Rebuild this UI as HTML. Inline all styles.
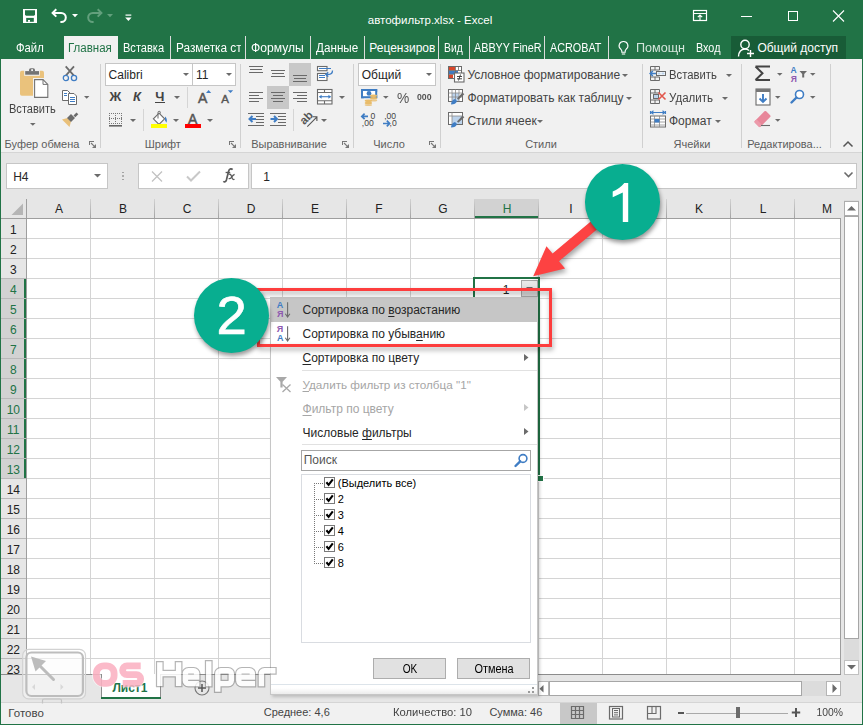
<!DOCTYPE html>
<html><head><meta charset="utf-8"><style>
html,body{margin:0;padding:0;width:863px;height:725px;overflow:hidden;background:#217346}
body{position:relative;font-family:"Liberation Sans", sans-serif}
.t{position:absolute;white-space:nowrap;font-family:"Liberation Sans", sans-serif}
svg{overflow:visible}
</style></head><body>
<div style="position:absolute;left:0px;top:0px;width:863px;height:725px;background:#217346"></div>
<svg style="position:absolute;left:23px;top:9px;" width="14" height="14" viewBox="0 0 14 14"><rect x="0" y="0" width="14" height="14" fill="#fff"/><path d="M2 1.2h10v4.6l-1 1h-8l-1-1z" fill="#217346"/><rect x="3.2" y="8.9" width="7.6" height="3.9" fill="#217346"/><rect x="5" y="11" width="2" height="1.8" fill="#fff"/></svg>
<svg style="position:absolute;left:50px;top:7px;" width="20" height="18" viewBox="0 0 20 18"><path d="M3 5.9h8.2a4.6 4.6 0 0 1 0 9.2h-0.8" fill="none" stroke="#fff" stroke-width="2"/><path d="M6.3 2.3L2.6 5.9l3.7 3.7" fill="none" stroke="#fff" stroke-width="2"/></svg>
<svg style="position:absolute;left:71.5px;top:13.8px;" width="6" height="4" viewBox="0 0 6 4"><path d="M0 0h6l-3 3.2z" fill="#fff"/></svg>
<svg style="position:absolute;left:84px;top:7px;" width="20" height="18" viewBox="0 0 20 18"><path d="M17 5.9h-8.2a4.6 4.6 0 0 0 0 9.2h0.8" fill="none" stroke="#63a07d" stroke-width="2"/><path d="M13.7 2.3l3.7 3.6-3.7 3.7" fill="none" stroke="#63a07d" stroke-width="2"/></svg>
<svg style="position:absolute;left:106.5px;top:13.8px;" width="6" height="4" viewBox="0 0 6 4"><path d="M0 0h6l-3 3.2z" fill="#63a07d"/></svg>
<svg style="position:absolute;left:125px;top:14px;" width="7" height="8" viewBox="0 0 7 8"><rect x="0.5" y="0.5" width="5.8" height="1.2" fill="#fff"/><path d="M0.2 3.6h6.4l-3.2 3.3z" fill="#fff"/></svg>
<div class="t" style="left:-70px;width:1000px;text-align:center;top:15.07px;font-size:11.5px;line-height:11.5px;color:#fff;font-weight:400;">автофильтр.xlsx - Excel</div>
<svg style="position:absolute;left:692px;top:9px;" width="17" height="14" viewBox="0 0 17 14"><rect x="1.5" y="1.5" width="13" height="10" fill="none" stroke="#fff" stroke-width="1.2"/><path d="M1.5 4.5h13" stroke="#fff" stroke-width="1"/><path d="M8 11V6M5.8 8.2L8 6l2.2 2.2" fill="none" stroke="#fff" stroke-width="1.1"/></svg>
<div style="position:absolute;left:741px;top:16px;width:11px;height:1px;background:#fff"></div>
<div style="position:absolute;left:788px;top:11px;width:10px;height:10px;border:1px solid #fff;box-sizing:border-box"></div>
<svg style="position:absolute;left:832px;top:10px;" width="13" height="12" viewBox="0 0 13 12"><path d="M1 0.5l11 11M12 0.5l-11 11" stroke="#fff" stroke-width="1.1"/></svg>
<div style="position:absolute;left:64px;top:36px;width:54px;height:24px;background:#f1f1f1"></div>
<div class="t" style="left:16.4px;top:42.34px;font-size:12px;line-height:12px;color:#fff;font-weight:400;transform:scaleX(0.94);transform-origin:left;">Файл</div>
<div class="t" style="left:68.1px;top:42.34px;font-size:12px;line-height:12px;color:#217346;font-weight:400;transform:scaleX(0.96);transform-origin:left;">Главная</div>
<div class="t" style="left:122.8px;top:42.34px;font-size:12px;line-height:12px;color:#fff;font-weight:400;transform:scaleX(0.92);transform-origin:left;">Вставка</div>
<div style="position:absolute;left:175.5px;top:38px;width:65px;height:20px;overflow:hidden">
<div class="t" style="left:0;top:4.34px;font-size:12px;line-height:12px;color:#fff;transform:scaleX(0.985);transform-origin:left">Разметка страницы</div></div>
<div class="t" style="left:251.2px;top:42.34px;font-size:12px;line-height:12px;color:#fff;font-weight:400;transform:scaleX(1.01);transform-origin:left;">Формулы</div>
<div class="t" style="left:315.5px;top:42.34px;font-size:12px;line-height:12px;color:#fff;font-weight:400;transform:scaleX(0.975);transform-origin:left;">Данные</div>
<div style="position:absolute;left:369.3px;top:38px;width:66px;height:20px;overflow:hidden">
<div class="t" style="left:0;top:4.34px;font-size:12px;line-height:12px;color:#fff;transform:scaleX(1.0);transform-origin:left">Рецензирование</div></div>
<div class="t" style="left:444.4px;top:42.34px;font-size:12px;line-height:12px;color:#fff;font-weight:400;transform:scaleX(0.86);transform-origin:left;">Вид</div>
<div style="position:absolute;left:473.8px;top:38px;width:67px;height:20px;overflow:hidden">
<div class="t" style="left:0;top:4.34px;font-size:12px;line-height:12px;color:#fff;transform:scaleX(0.9);transform-origin:left">ABBYY FineReader 12</div></div>
<div class="t" style="left:549.8px;top:42.34px;font-size:12px;line-height:12px;color:#fff;font-weight:400;transform:scaleX(0.9);transform-origin:left;">ACROBAT</div>
<div style="position:absolute;left:170px;top:36px;width:1px;height:23px;background:#dcdcdc"></div>
<div style="position:absolute;left:245px;top:36px;width:1px;height:23px;background:#dcdcdc"></div>
<div style="position:absolute;left:310px;top:36px;width:1px;height:23px;background:#dcdcdc"></div>
<div style="position:absolute;left:364px;top:36px;width:1px;height:23px;background:#dcdcdc"></div>
<div style="position:absolute;left:438px;top:36px;width:1px;height:23px;background:#dcdcdc"></div>
<div style="position:absolute;left:469px;top:36px;width:1px;height:23px;background:#dcdcdc"></div>
<div style="position:absolute;left:544px;top:36px;width:1px;height:23px;background:#dcdcdc"></div>
<div style="position:absolute;left:608px;top:36px;width:1px;height:23px;background:#dcdcdc"></div>
<svg style="position:absolute;left:617px;top:40px;" width="13" height="16" viewBox="0 0 13 16"><path d="M6.5 1.5a4.3 4.3 0 0 0-2.6 7.8c.6.5.9 1.1.9 1.8v1.2h3.4v-1.2c0-.7.3-1.3.9-1.8a4.3 4.3 0 0 0-2.6-7.8z" fill="none" stroke="#fff" stroke-width="1.1"/><path d="M4.8 14h3.4" stroke="#fff" stroke-width="1.1"/></svg>
<div class="t" style="left:635.6px;top:42.34px;font-size:12px;line-height:12px;color:#d5e6dc;font-weight:400;transform:scaleX(1.05);transform-origin:left;">Помощн</div>
<div class="t" style="left:696.2px;top:42.34px;font-size:12px;line-height:12px;color:#fff;font-weight:400;transform:scaleX(0.9);transform-origin:left;">Вход</div>
<div style="position:absolute;left:731px;top:36px;width:115px;height:23px;background:#185c37"></div>
<svg style="position:absolute;left:737px;top:38px;" width="18" height="20" viewBox="0 0 18 20"><circle cx="8" cy="6.5" r="4.2" fill="none" stroke="#fff" stroke-width="1.4"/><path d="M1.5 18.5c0-4.5 2.8-7.5 6.5-7.5 1.6 0 3 .5 4 1.4" fill="none" stroke="#fff" stroke-width="1.4"/><path d="M13.5 12v7M10 15.5h7" stroke="#fff" stroke-width="1.4"/></svg>
<div class="t" style="left:757.4px;top:42.34px;font-size:12px;line-height:12px;color:#fff;font-weight:400;">Общий доступ</div>
<div style="position:absolute;left:1px;top:59px;width:861px;height:93px;background:#f1f1f1"></div>
<div style="position:absolute;left:1px;top:152px;width:861px;height:1px;background:#d5d5d5"></div>
<div style="position:absolute;left:100px;top:64px;width:1px;height:84px;background:#d0d0d0"></div>
<div style="position:absolute;left:240px;top:64px;width:1px;height:84px;background:#d0d0d0"></div>
<div style="position:absolute;left:353px;top:64px;width:1px;height:84px;background:#d0d0d0"></div>
<div style="position:absolute;left:440px;top:64px;width:1px;height:84px;background:#d0d0d0"></div>
<div style="position:absolute;left:642px;top:64px;width:1px;height:84px;background:#d0d0d0"></div>
<div style="position:absolute;left:741px;top:64px;width:1px;height:84px;background:#d0d0d0"></div>
<div style="position:absolute;left:830px;top:64px;width:1px;height:84px;background:#d0d0d0"></div>
<div class="t" style="left:4.6px;top:139.09px;font-size:11px;line-height:11px;color:#5d5d5d;font-weight:400;">Буфер обмена</div>
<div class="t" style="left:-337.2px;width:1000px;text-align:center;top:139.09px;font-size:11px;line-height:11px;color:#5d5d5d;font-weight:400;">Шрифт</div>
<div class="t" style="left:-211px;width:1000px;text-align:center;top:139.09px;font-size:11px;line-height:11px;color:#5d5d5d;font-weight:400;">Выравнивание</div>
<div class="t" style="left:-111px;width:1000px;text-align:center;top:139.09px;font-size:11px;line-height:11px;color:#5d5d5d;font-weight:400;">Число</div>
<div class="t" style="left:41px;width:1000px;text-align:center;top:139.09px;font-size:11px;line-height:11px;color:#5d5d5d;font-weight:400;">Стили</div>
<div class="t" style="left:192px;width:1000px;text-align:center;top:139.09px;font-size:11px;line-height:11px;color:#5d5d5d;font-weight:400;">Ячейки</div>
<div class="t" style="left:747.2px;top:139.09px;font-size:11px;line-height:11px;color:#5d5d5d;font-weight:400;">Редактирова...</div>
<svg style="position:absolute;left:19px;top:66px;" width="32" height="34" viewBox="0 0 32 34"><rect x="1" y="4.8" width="24" height="24.9" rx="1.8" fill="#eac27c"/><rect x="5.2" y="4" width="15.6" height="5.8" fill="#f1f1f1"/><rect x="6.2" y="5.1" width="13.8" height="3.6" fill="#737373"/><path d="M10 5.2v-1.2a1.8 1.8 0 0 1 1.8-1.8h2.4a1.8 1.8 0 0 1 1.8 1.8v1.2z" fill="#737373"/><rect x="12.2" y="3.2" width="1.8" height="1.8" fill="#f1f1f1"/><rect x="14" y="12" width="16" height="21" fill="#f1f1f1"/><path d="M15.6 13.6h8.4l4.8 4.8v13h-13.2z" fill="#fff" stroke="#737373" stroke-width="1.1"/><path d="M24 13.6v4.8h4.8" fill="none" stroke="#737373" stroke-width="1"/></svg>
<div class="t" style="left:8.7px;top:102.84px;font-size:12px;line-height:12px;color:#444444;font-weight:400;transform:scaleX(0.92);transform-origin:left;">Вставить</div>
<svg style="position:absolute;left:29.8px;top:123px;" width="5.6" height="4" viewBox="0 0 5.6 4"><path d="M0 0h5.6l-2.8 2.8z" fill="#6b6b6b"/></svg>
<svg style="position:absolute;left:62px;top:65px;" width="16" height="17" viewBox="0 0 16 17"><path d="M3.7 1.3l8 9M12 1.3l-8 9" stroke="#6b6b6b" stroke-width="1.8"/><circle cx="3.9" cy="13" r="2.6" fill="#f1f1f1" stroke="#3f7dc4" stroke-width="1.3"/><circle cx="12" cy="13" r="2.6" fill="#f1f1f1" stroke="#3f7dc4" stroke-width="1.3"/></svg>
<svg style="position:absolute;left:61px;top:89px;" width="17" height="16" viewBox="0 0 17 16"><path d="M1.5 1.5h5l2.5 2.5v7.5h-7.5z" fill="#fff" stroke="#6b6b6b" stroke-width="1"/><rect x="3" y="4" width="3" height="1" fill="#3f7dc4"/><rect x="3" y="6" width="3" height="1" fill="#3f7dc4"/><path d="M7.5 4.5h5.5l2.5 2.5v8.5h-8z" fill="#fff" stroke="#6b6b6b" stroke-width="1"/><rect x="9" y="8" width="5" height="1" fill="#3f7dc4"/><rect x="9" y="10" width="5" height="1" fill="#3f7dc4"/><rect x="9" y="12" width="5" height="1" fill="#3f7dc4"/></svg>
<svg style="position:absolute;left:84px;top:96px;" width="5.4" height="4" viewBox="0 0 5.4 4"><path d="M0 0h5.4l-2.7 2.7z" fill="#6b6b6b"/></svg>
<svg style="position:absolute;left:61px;top:111px;" width="18" height="17" viewBox="0 0 18 17"><path d="M1 8.5l5.5-1.5 3.5 3.5-1.5 5.5z" fill="#e9c07a"/><path d="M6 7l4-4 4 4-4 4z" fill="#6b6b6b"/><path d="M12.5 4.5l3-3 1.8 1.8-3 3z" fill="#6b6b6b"/></svg>
<svg style="position:absolute;left:89px;top:140px;" width="8" height="9" viewBox="0 0 8 9"><rect x="0" y="1" width="5" height="1" fill="#777"/><rect x="0" y="1" width="1" height="4" fill="#777"/><path d="M2 3l3.2 3.2" stroke="#777" stroke-width="1.1"/><path d="M7 8H3L7 4z" fill="#777"/></svg>
<div style="position:absolute;left:105px;top:63px;width:88px;height:23px;background:#fff;border:1px solid #c6c6c6;box-sizing:border-box"></div>
<div style="position:absolute;left:192px;top:63px;width:44px;height:23px;background:#fff;border:1px solid #c6c6c6;box-sizing:border-box"></div>
<div class="t" style="left:108.6px;top:68.84px;font-size:12px;line-height:12px;color:#262626;font-weight:400;">Calibri</div>
<div class="t" style="left:196px;top:68.84px;font-size:12px;line-height:12px;color:#262626;font-weight:400;">11</div>
<svg style="position:absolute;left:182.5px;top:73px;" width="6" height="4" viewBox="0 0 6 4"><path d="M0 0h6l-3.0 3.0z" fill="#6b6b6b"/></svg>
<svg style="position:absolute;left:225.5px;top:73px;" width="6" height="4" viewBox="0 0 6 4"><path d="M0 0h6l-3.0 3.0z" fill="#6b6b6b"/></svg>
<div class="t" style="left:109.5px;top:90.00px;font-size:13px;line-height:13px;color:#444444;font-weight:700;">Ж</div>
<div class="t" style="left:133px;top:90.00px;font-size:13px;line-height:13px;color:#444444;font-weight:700;font-style:italic">К</div>
<div class="t" style="left:155.3px;top:90.00px;font-size:13px;line-height:13px;color:#444444;font-weight:700;">Ч</div>
<div style="position:absolute;left:155px;top:102px;width:10px;height:1px;background:#444444"></div>
<svg style="position:absolute;left:173.5px;top:96px;" width="6" height="4" viewBox="0 0 6 4"><path d="M0 0h6l-3.0 3.0z" fill="#6b6b6b"/></svg>
<div style="position:absolute;left:187px;top:87px;width:1px;height:21px;background:#d5d5d5"></div>
<svg style="position:absolute;left:197px;top:88px;" width="16" height="16" viewBox="0 0 16 16"><text x="1" y="14.5" font-family="Liberation Sans" font-size="14" fill="#555" stroke="#555" stroke-width="0.5">A</text><path d="M9 5l2.6-2.9 2.6 2.9z" fill="#3f7dc4"/></svg>
<svg style="position:absolute;left:220px;top:88px;" width="16" height="16" viewBox="0 0 16 16"><text x="1.2" y="14.5" font-family="Liberation Sans" font-size="11.5" fill="#555" stroke="#555" stroke-width="0.45">A</text><path d="M7.8 2.2h5.4l-2.7 2.9z" fill="#3f7dc4"/></svg>
<svg style="position:absolute;left:109px;top:113px;" width="14" height="14" viewBox="0 0 14 14"><rect x="0" y="0" width="1" height="1" fill="#777"/><rect x="0" y="5" width="1" height="1" fill="#777"/><rect x="0" y="10" width="1" height="1" fill="#777"/><rect x="2" y="0" width="1" height="1" fill="#777"/><rect x="2" y="5" width="1" height="1" fill="#777"/><rect x="2" y="10" width="1" height="1" fill="#777"/><rect x="4" y="0" width="1" height="1" fill="#777"/><rect x="4" y="5" width="1" height="1" fill="#777"/><rect x="4" y="10" width="1" height="1" fill="#777"/><rect x="6" y="0" width="1" height="1" fill="#777"/><rect x="6" y="5" width="1" height="1" fill="#777"/><rect x="6" y="10" width="1" height="1" fill="#777"/><rect x="8" y="0" width="1" height="1" fill="#777"/><rect x="8" y="5" width="1" height="1" fill="#777"/><rect x="8" y="10" width="1" height="1" fill="#777"/><rect x="10" y="0" width="1" height="1" fill="#777"/><rect x="10" y="5" width="1" height="1" fill="#777"/><rect x="10" y="10" width="1" height="1" fill="#777"/><rect x="12" y="0" width="1" height="1" fill="#777"/><rect x="12" y="5" width="1" height="1" fill="#777"/><rect x="12" y="10" width="1" height="1" fill="#777"/><rect x="0" y="0" width="1" height="1" fill="#777"/><rect x="6" y="0" width="1" height="1" fill="#777"/><rect x="12" y="0" width="1" height="1" fill="#777"/><rect x="0" y="2" width="1" height="1" fill="#777"/><rect x="6" y="2" width="1" height="1" fill="#777"/><rect x="12" y="2" width="1" height="1" fill="#777"/><rect x="0" y="4" width="1" height="1" fill="#777"/><rect x="6" y="4" width="1" height="1" fill="#777"/><rect x="12" y="4" width="1" height="1" fill="#777"/><rect x="0" y="6" width="1" height="1" fill="#777"/><rect x="6" y="6" width="1" height="1" fill="#777"/><rect x="12" y="6" width="1" height="1" fill="#777"/><rect x="0" y="8" width="1" height="1" fill="#777"/><rect x="6" y="8" width="1" height="1" fill="#777"/><rect x="12" y="8" width="1" height="1" fill="#777"/><rect x="0" y="10" width="1" height="1" fill="#777"/><rect x="6" y="10" width="1" height="1" fill="#777"/><rect x="12" y="10" width="1" height="1" fill="#777"/><rect x="0" y="12" width="13" height="1.6" fill="#666"/></svg>
<svg style="position:absolute;left:129.5px;top:118.5px;" width="6" height="4" viewBox="0 0 6 4"><path d="M0 0h6l-3.0 3.0z" fill="#6b6b6b"/></svg>
<div style="position:absolute;left:143px;top:109px;width:1px;height:22px;background:#d5d5d5"></div>
<svg style="position:absolute;left:150px;top:110px;" width="18" height="19" viewBox="0 0 18 19"><path d="M9 3.2l5.6 5.6-5.6 5.6-5.6-5.6z" fill="#fff" stroke="#6b6b6b" stroke-width="1.1"/><path d="M8 8.5V2.5a1.2 1.2 0 0 1 2.4 0v1" fill="none" stroke="#6b6b6b" stroke-width="1"/><path d="M15 6.5c1.6 1.2 2.4 3.2 1.5 6.2l-1.6-2.4z" fill="#3f7dc4"/><rect x="1" y="14" width="16" height="4" fill="#ffff00"/></svg>
<svg style="position:absolute;left:172.5px;top:118.5px;" width="6" height="4" viewBox="0 0 6 4"><path d="M0 0h6l-3.0 3.0z" fill="#6b6b6b"/></svg>
<svg style="position:absolute;left:184px;top:110px;" width="18" height="19" viewBox="0 0 18 19"><text x="4" y="13.6" font-family="Liberation Sans" font-size="14" fill="#555" stroke="#555" stroke-width="0.5">A</text><rect x="1" y="14" width="16" height="4" fill="#ff0000"/></svg>
<svg style="position:absolute;left:206.5px;top:118.5px;" width="6" height="4" viewBox="0 0 6 4"><path d="M0 0h6l-3.0 3.0z" fill="#6b6b6b"/></svg>
<svg style="position:absolute;left:229px;top:140px;" width="8" height="9" viewBox="0 0 8 9"><rect x="0" y="1" width="5" height="1" fill="#777"/><rect x="0" y="1" width="1" height="4" fill="#777"/><path d="M2 3l3.2 3.2" stroke="#777" stroke-width="1.1"/><path d="M7 8H3L7 4z" fill="#777"/></svg>
<div style="position:absolute;left:289px;top:63px;width:22px;height:23px;background:#c8c8c8"></div>
<div style="position:absolute;left:267px;top:86px;width:22px;height:23px;background:#c8c8c8"></div>
<div style="position:absolute;left:249px;top:66px;width:14px;height:1px;background:#696969"></div>
<div style="position:absolute;left:250px;top:69px;width:12px;height:1px;background:#696969"></div>
<div style="position:absolute;left:249px;top:72px;width:14px;height:1px;background:#696969"></div>
<div style="position:absolute;left:271px;top:70px;width:14px;height:1px;background:#696969"></div>
<div style="position:absolute;left:272px;top:73px;width:12px;height:1px;background:#696969"></div>
<div style="position:absolute;left:271px;top:76px;width:14px;height:1px;background:#696969"></div>
<div style="position:absolute;left:293px;top:75px;width:14px;height:1px;background:#696969"></div>
<div style="position:absolute;left:294px;top:78px;width:12px;height:1px;background:#696969"></div>
<div style="position:absolute;left:293px;top:81px;width:14px;height:1px;background:#696969"></div>
<div style="position:absolute;left:249px;top:92px;width:14px;height:1px;background:#696969"></div>
<div style="position:absolute;left:249px;top:95px;width:10px;height:1px;background:#696969"></div>
<div style="position:absolute;left:249px;top:98px;width:14px;height:1px;background:#696969"></div>
<div style="position:absolute;left:249px;top:101px;width:10px;height:1px;background:#696969"></div>
<div style="position:absolute;left:271px;top:92px;width:14px;height:1px;background:#696969"></div>
<div style="position:absolute;left:273px;top:95px;width:10px;height:1px;background:#696969"></div>
<div style="position:absolute;left:271px;top:98px;width:14px;height:1px;background:#696969"></div>
<div style="position:absolute;left:273px;top:101px;width:10px;height:1px;background:#696969"></div>
<div style="position:absolute;left:293px;top:92px;width:14px;height:1px;background:#696969"></div>
<div style="position:absolute;left:297px;top:95px;width:10px;height:1px;background:#696969"></div>
<div style="position:absolute;left:293px;top:98px;width:14px;height:1px;background:#696969"></div>
<div style="position:absolute;left:297px;top:101px;width:10px;height:1px;background:#696969"></div>
<svg style="position:absolute;left:316px;top:65px;" width="18" height="17" viewBox="0 0 18 17"><rect x="1.5" y="1.5" width="9.5" height="4.2" fill="#fff" stroke="#6b6b6b" stroke-width="1.1"/><rect x="1.5" y="8.5" width="9.5" height="7" fill="#fff" stroke="#6b6b6b" stroke-width="1.1"/><path d="M3 3.5h12M3 10.5h6M3 12.5h6" stroke="#3f7dc4" stroke-width="1"/><path d="M16.5 5.5c0 2.5-1.5 4-4.5 4h-2" fill="none" stroke="#3f7dc4" stroke-width="1.3"/><path d="M12.2 7.2l-2.4 2.3 2.4 2.3" fill="none" stroke="#3f7dc4" stroke-width="1.3"/></svg>
<svg style="position:absolute;left:316px;top:88px;" width="18" height="17" viewBox="0 0 18 17"><rect x="1.5" y="1.5" width="14.5" height="14.5" fill="#fff" stroke="#6b6b6b" stroke-width="1.1"/><path d="M1.5 4.5h14.5M1.5 12.8h14.5M8.5 1.5v3M8.5 12.8v3.2" stroke="#6b6b6b" stroke-width="1.1"/><path d="M3.5 8.7h11" stroke="#3f7dc4" stroke-width="1.1"/><path d="M3 8.7l2.6-2v4zM15 8.7l-2.6-2v4z" fill="#3f7dc4"/></svg>
<svg style="position:absolute;left:339px;top:96px;" width="6" height="4" viewBox="0 0 6 4"><path d="M0 0h6l-3.0 3.0z" fill="#6b6b6b"/></svg>
<div style="position:absolute;left:248px;top:113px;width:16px;height:1px;background:#696969"></div>
<div style="position:absolute;left:256px;top:116px;width:8px;height:1px;background:#696969"></div>
<div style="position:absolute;left:256px;top:119px;width:8px;height:1px;background:#696969"></div>
<div style="position:absolute;left:256px;top:122px;width:8px;height:1px;background:#696969"></div>
<div style="position:absolute;left:248px;top:125px;width:16px;height:1px;background:#696969"></div>
<svg style="position:absolute;left:248px;top:114px;" width="9" height="10" viewBox="0 0 9 10"><path d="M1.5 5h6.5M4.5 2l-3 3 3 3" fill="none" stroke="#3f7dc4" stroke-width="2"/></svg>
<div style="position:absolute;left:270px;top:113px;width:16px;height:1px;background:#696969"></div>
<div style="position:absolute;left:278px;top:116px;width:8px;height:1px;background:#696969"></div>
<div style="position:absolute;left:278px;top:119px;width:8px;height:1px;background:#696969"></div>
<div style="position:absolute;left:278px;top:122px;width:8px;height:1px;background:#696969"></div>
<div style="position:absolute;left:270px;top:125px;width:16px;height:1px;background:#696969"></div>
<svg style="position:absolute;left:270px;top:114px;" width="9" height="10" viewBox="0 0 9 10"><path d="M0.5 5h6M4 2l3 3-3 3" fill="none" stroke="#3f7dc4" stroke-width="2"/></svg>
<div style="position:absolute;left:293px;top:109px;width:1px;height:22px;background:#d5d5d5"></div>
<svg style="position:absolute;left:300px;top:111px;" width="20" height="18" viewBox="0 0 20 18"><text x="0" y="0" font-family="Liberation Sans" font-size="11.5" font-weight="700" fill="#555" transform="translate(4.2 14.2) rotate(-45)">ab</text><path d="M7.3 15.6l9.2-9.2M12.6 5.8h4.3v4.3" fill="none" stroke="#555" stroke-width="1.1"/></svg>
<svg style="position:absolute;left:321px;top:119px;" width="6" height="4" viewBox="0 0 6 4"><path d="M0 0h6l-3.0 3.0z" fill="#6b6b6b"/></svg>
<svg style="position:absolute;left:342px;top:140px;" width="8" height="9" viewBox="0 0 8 9"><rect x="0" y="1" width="5" height="1" fill="#777"/><rect x="0" y="1" width="1" height="4" fill="#777"/><path d="M2 3l3.2 3.2" stroke="#777" stroke-width="1.1"/><path d="M7 8H3L7 4z" fill="#777"/></svg>
<div style="position:absolute;left:358px;top:63px;width:78px;height:23px;background:#fff;border:1px solid #c6c6c6;box-sizing:border-box"></div>
<div class="t" style="left:361.7px;top:68.84px;font-size:12px;line-height:12px;color:#262626;font-weight:400;">Общий</div>
<svg style="position:absolute;left:426px;top:73px;" width="6" height="4" viewBox="0 0 6 4"><path d="M0 0h6l-3.0 3.0z" fill="#6b6b6b"/></svg>
<svg style="position:absolute;left:360px;top:88px;" width="19" height="19" viewBox="0 0 19 19"><rect x="2" y="2" width="14.2" height="7.2" fill="#fff" stroke="#3f7dc4" stroke-width="2"/><path d="M1 1h3l-3 3zM17.2 1h-3l3 3zM1 10.2v-3l3 3zM17.2 10.2v-3l-3 3z" fill="#3f7dc4"/><circle cx="9" cy="5.4" r="2.4" fill="#3f7dc4"/><ellipse cx="13.6" cy="7.8" rx="3.6" ry="1.3" fill="#e9bc6a"/><ellipse cx="13.6" cy="10.2" rx="3.6" ry="1.2" fill="#e9bc6a"/><ellipse cx="13.6" cy="12.4" rx="3.6" ry="1.1" fill="#eac88c"/><ellipse cx="8.4" cy="12.7" rx="3.7" ry="1.3" fill="#e9bc6a"/><ellipse cx="8.4" cy="15" rx="3.7" ry="1.2" fill="#e9bc6a"/><ellipse cx="8.4" cy="17" rx="3.7" ry="1.1" fill="#eac88c"/></svg>
<svg style="position:absolute;left:382.7px;top:96.2px;" width="5.6" height="4" viewBox="0 0 5.6 4"><path d="M0 0h5.6l-2.8 2.8z" fill="#6b6b6b"/></svg>
<div class="t" style="left:397.3px;top:90.10px;font-size:15px;line-height:15px;color:#555;font-weight:400;transform:scaleX(0.92);transform-origin:left;">%</div>
<div class="t" style="left:417.4px;top:92.26px;font-size:9.5px;line-height:9.5px;color:#555;font-weight:700;transform:scaleX(0.92);transform-origin:left;">000</div>
<svg style="position:absolute;left:360px;top:111px;" width="17" height="17" viewBox="0 0 17 17"><path d="M1.8 5.4h6.2M4.6 2.6L1.8 5.4l2.8 2.8" fill="none" stroke="#3f7dc4" stroke-width="1.7"/><text x="10.5" y="8" font-family="Liberation Sans" font-size="8.6" fill="#444">0</text><text x="1.8" y="15.2" font-family="Liberation Sans" font-size="8.6" fill="#444">,00</text></svg>
<svg style="position:absolute;left:382px;top:111px;" width="17" height="17" viewBox="0 0 17 17"><text x="2.2" y="8" font-family="Liberation Sans" font-size="8.6" fill="#444">,00</text><path d="M1 12.5h6.4M4.8 9.7l2.8 2.8-2.8 2.8" fill="none" stroke="#3f7dc4" stroke-width="1.7"/><text x="7.6" y="15.2" font-family="Liberation Sans" font-size="8.6" fill="#444">,0</text></svg>
<svg style="position:absolute;left:429px;top:140px;" width="8" height="9" viewBox="0 0 8 9"><rect x="0" y="1" width="5" height="1" fill="#777"/><rect x="0" y="1" width="1" height="4" fill="#777"/><path d="M2 3l3.2 3.2" stroke="#777" stroke-width="1.1"/><path d="M7 8H3L7 4z" fill="#777"/></svg>
<svg style="position:absolute;left:447px;top:65px;" width="18" height="18" viewBox="0 0 18 18"><rect x="1.5" y="1.5" width="13" height="12" fill="#fff" stroke="#6b6b6b" stroke-width="1"/><rect x="2" y="2" width="6" height="3.5" fill="#d9472b"/><rect x="2" y="6" width="9" height="3" fill="#3f7dc4"/><rect x="2" y="9.5" width="4" height="3.5" fill="#d9472b"/><path d="M8.5 1.5v12M11.5 1.5v4M1.5 5.5h13M1.5 9.3h13" stroke="#6b6b6b" stroke-width="0.8"/><rect x="7.5" y="8" width="9.5" height="9" fill="#fff" stroke="#6b6b6b" stroke-width="1.1"/><path d="M10 11.5h5M10 13.8h5M11.5 15.5l2-6" stroke="#333" stroke-width="0.9"/></svg>
<div class="t" style="left:467.4px;top:68.74px;font-size:12px;line-height:12px;color:#444444;font-weight:400;">Условное форматирование</div>
<svg style="position:absolute;left:621.5px;top:73.5px;" width="6" height="4" viewBox="0 0 6 4"><path d="M0 0h6l-3.0 3.0z" fill="#6b6b6b"/></svg>
<svg style="position:absolute;left:447px;top:88px;" width="18" height="18" viewBox="0 0 18 18"><rect x="1.5" y="1.5" width="14" height="12" fill="#fff" stroke="#6b6b6b" stroke-width="1"/><rect x="5" y="5" width="7" height="8" fill="#bcd3ec"/><path d="M5 1.5v12M8.5 1.5v12M12 1.5v12M1.5 5h14M1.5 9h14" stroke="#8a8a8a" stroke-width="0.8"/><path d="M10 10.5l5.5-6 1.8 1.8-6 5.5z" fill="#6b6b6b"/><path d="M4 16.5c0-2.5 1.5-5 4-5.5l2 2c-.5 2.5-3 3.5-6 3.5z" fill="#3f7dc4"/></svg>
<div class="t" style="left:467.4px;top:91.74px;font-size:12px;line-height:12px;color:#444444;font-weight:400;">Форматировать как таблицу</div>
<svg style="position:absolute;left:625.5px;top:96.5px;" width="6" height="4" viewBox="0 0 6 4"><path d="M0 0h6l-3.0 3.0z" fill="#6b6b6b"/></svg>
<svg style="position:absolute;left:447px;top:111px;" width="18" height="18" viewBox="0 0 18 18"><rect x="1.5" y="1.5" width="14" height="12" fill="#fff" stroke="#6b6b6b" stroke-width="1"/><rect x="5" y="5" width="10" height="8" fill="#bcd3ec"/><path d="M1.5 5h14M5 1.5v12" stroke="#8a8a8a" stroke-width="0.8"/><path d="M10 10.5l5.5-6 1.8 1.8-6 5.5z" fill="#6b6b6b"/><path d="M4 16.5c0-2.5 1.5-5 4-5.5l2 2c-.5 2.5-3 3.5-6 3.5z" fill="#3f7dc4"/></svg>
<div class="t" style="left:467.4px;top:114.74px;font-size:12px;line-height:12px;color:#444444;font-weight:400;">Стили ячеек</div>
<svg style="position:absolute;left:537px;top:119.5px;" width="6" height="4" viewBox="0 0 6 4"><path d="M0 0h6l-3.0 3.0z" fill="#6b6b6b"/></svg>
<svg style="position:absolute;left:649px;top:65px;" width="18" height="18" viewBox="0 0 18 18"><path d="M1.5 1.5h9v3.5h-9zM1.5 12h9v3.5h-9zM1.5 5v7M6 1.5v3.5M6 12v3.5" fill="none" stroke="#6b6b6b" stroke-width="1"/><rect x="7.5" y="6.5" width="9" height="4" fill="#fff" stroke="#6b6b6b" stroke-width="1"/><rect x="8.5" y="7.5" width="3" height="2" fill="#bcd3ec"/><rect x="12.5" y="7.5" width="3" height="2" fill="#bcd3ec"/><path d="M1 8.5h6M3.8 6l-2.6 2.5 2.6 2.5" fill="none" stroke="#3f7dc4" stroke-width="1.6"/></svg>
<div class="t" style="left:669px;top:68.74px;font-size:12px;line-height:12px;color:#444444;font-weight:400;transform:scaleX(0.94);transform-origin:left;">Вставить</div>
<svg style="position:absolute;left:726px;top:73.5px;" width="6" height="4" viewBox="0 0 6 4"><path d="M0 0h6l-3.0 3.0z" fill="#6b6b6b"/></svg>
<svg style="position:absolute;left:649px;top:88px;" width="18" height="18" viewBox="0 0 18 18"><path d="M1.5 1.5h9v3.5h-9zM1.5 12h9v3.5h-9zM1.5 5v7M6 1.5v3.5M6 12v3.5" fill="none" stroke="#6b6b6b" stroke-width="1"/><rect x="4.5" y="6.5" width="5" height="4" fill="#bcd3ec" stroke="#6b6b6b" stroke-width="1"/><path d="M9.5 4.5l7 7M16.5 4.5l-7 7" stroke="#e2574c" stroke-width="1.6"/></svg>
<div class="t" style="left:669px;top:91.74px;font-size:12px;line-height:12px;color:#444444;font-weight:400;transform:scaleX(0.96);transform-origin:left;">Удалить</div>
<svg style="position:absolute;left:722px;top:96.5px;" width="6" height="4" viewBox="0 0 6 4"><path d="M0 0h6l-3.0 3.0z" fill="#6b6b6b"/></svg>
<svg style="position:absolute;left:649px;top:110px;" width="18" height="19" viewBox="0 0 18 19"><path d="M1.5 1v3M16.5 1v3M2 2.5h14M4.5 0.8l-2.3 1.7 2.3 1.7M13.5 0.8l2.3 1.7-2.3 1.7" fill="none" stroke="#3f7dc4" stroke-width="1.1"/><rect x="1.5" y="6" width="15" height="11" fill="#fff" stroke="#6b6b6b" stroke-width="1"/><path d="M1.5 9h15M1.5 12h15M1.5 15h15M5.5 6v11M10.5 6v11" stroke="#8a8a8a" stroke-width="0.8"/><rect x="5.5" y="9" width="5" height="3.5" fill="#3f7dc4"/></svg>
<div class="t" style="left:669px;top:114.74px;font-size:12px;line-height:12px;color:#444444;font-weight:400;">Формат</div>
<svg style="position:absolute;left:715px;top:119.5px;" width="6" height="4" viewBox="0 0 6 4"><path d="M0 0h6l-3.0 3.0z" fill="#6b6b6b"/></svg>
<svg style="position:absolute;left:754px;top:65px;" width="18" height="17" viewBox="0 0 18 17"><path d="M1.5 1.5h14.5M1.5 15h14.5M1.5 1.5l7 6.75-7 6.75" fill="none" stroke="#444" stroke-width="2"/></svg>
<svg style="position:absolute;left:777px;top:73px;" width="5.5" height="4" viewBox="0 0 5.5 4"><path d="M0 0h5.5l-2.75 2.75z" fill="#6b6b6b"/></svg>
<svg style="position:absolute;left:790px;top:65px;" width="18" height="18" viewBox="0 0 18 18"><text x="0.5" y="7.5" font-family="Liberation Sans" font-size="8.5" font-weight="700" fill="#3f7dc4">A</text><text x="0.8" y="16.5" font-family="Liberation Sans" font-size="8.5" font-weight="700" fill="#8e58b0">Я</text><path d="M9.5 6h7.5l-2.8 3v3.5h-2v-3.5z" fill="#6b6b6b"/></svg>
<svg style="position:absolute;left:810px;top:73px;" width="5.5" height="4" viewBox="0 0 5.5 4"><path d="M0 0h5.5l-2.75 2.75z" fill="#6b6b6b"/></svg>
<svg style="position:absolute;left:755px;top:88px;" width="17" height="18" viewBox="0 0 17 18"><rect x="1" y="1" width="14" height="16" fill="#fff" stroke="#6b6b6b" stroke-width="1.1"/><rect x="1" y="1" width="14" height="3" fill="#777"/><path d="M8 6v8M4.5 10.5l3.5 3.5 3.5-3.5" fill="none" stroke="#3f7dc4" stroke-width="1.9"/></svg>
<svg style="position:absolute;left:775px;top:96px;" width="5.5" height="4" viewBox="0 0 5.5 4"><path d="M0 0h5.5l-2.75 2.75z" fill="#6b6b6b"/></svg>
<svg style="position:absolute;left:790px;top:89px;" width="16" height="15" viewBox="0 0 16 15"><circle cx="9.5" cy="5.5" r="4" fill="#fff" stroke="#3f7dc4" stroke-width="1.6"/><path d="M6.5 8.5l-5 5" stroke="#3f7dc4" stroke-width="2.4" stroke-linecap="round"/></svg>
<svg style="position:absolute;left:810px;top:96px;" width="5.5" height="4" viewBox="0 0 5.5 4"><path d="M0 0h5.5l-2.75 2.75z" fill="#6b6b6b"/></svg>
<svg style="position:absolute;left:755px;top:112px;" width="17" height="15" viewBox="0 0 17 15"><g transform="translate(7.5 7) rotate(-45)"><rect x="-8" y="-4" width="16" height="8" rx="1.2" fill="#e8879a"/><rect x="-8" y="-4" width="3.5" height="8" rx="1" fill="#ec9aaa"/></g><path d="M6 13.5h9" stroke="#6b6b6b" stroke-width="1.1"/></svg>
<svg style="position:absolute;left:775px;top:119px;" width="5.5" height="4" viewBox="0 0 5.5 4"><path d="M0 0h5.5l-2.75 2.75z" fill="#6b6b6b"/></svg>
<svg style="position:absolute;left:842px;top:140px;" width="12" height="8" viewBox="0 0 12 8"><path d="M1.5 6.5l4.5-4.5 4.5 4.5" fill="none" stroke="#555" stroke-width="1.5"/></svg>
<div style="position:absolute;left:1px;top:153px;width:861px;height:46px;background:#e6e6e6"></div>
<div style="position:absolute;left:6px;top:163px;width:102px;height:26px;background:#fff;border:1px solid #c6c6c6;box-sizing:border-box"></div>
<div class="t" style="left:13.2px;top:170.84px;font-size:12px;line-height:12px;color:#262626;font-weight:400;">H4</div>
<svg style="position:absolute;left:94px;top:173.5px;" width="7" height="4" viewBox="0 0 7 4"><path d="M0 0h7l-3.5 3.5z" fill="#6b6b6b"/></svg>
<div style="position:absolute;left:122px;top:171.5px;width:1.6px;height:1.6px;background:#9a9a9a;border-radius:1px"></div>
<div style="position:absolute;left:122px;top:175px;width:1.6px;height:1.6px;background:#9a9a9a;border-radius:1px"></div>
<div style="position:absolute;left:122px;top:178.5px;width:1.6px;height:1.6px;background:#9a9a9a;border-radius:1px"></div>
<div style="position:absolute;left:138px;top:163px;width:111px;height:26px;background:#fff;border:1px solid #c6c6c6;box-sizing:border-box"></div>
<svg style="position:absolute;left:151px;top:171px;" width="12" height="11" viewBox="0 0 12 11"><path d="M1 0.5l10 10M11 0.5l-10 10" stroke="#c2c2c2" stroke-width="1.3"/></svg>
<svg style="position:absolute;left:186px;top:170px;" width="15" height="12" viewBox="0 0 15 12"><path d="M1 6.5l4 4 9-9" fill="none" stroke="#c8c8c8" stroke-width="2"/></svg>
<svg style="position:absolute;left:220px;top:165.2px;" width="18" height="18" viewBox="0 0 18 18"><path d="M12.6 4.6c-0.8-0.9-3.3-1.4-4 1.6l-2.2 8.8c-0.5 1.8-2 2.3-3 1.2" fill="none" stroke="#5a5a5a" stroke-width="1.7"/><path d="M5.6 7.5h4.6" stroke="#5a5a5a" stroke-width="1.3"/><path d="M8.6 9.4c1.5-0.6 2.2 0 2.8 1.5l1.1 2.8c0.5 1 1.3 0.9 2 0.5M14.6 9.3c-1.2 0.3-2.4 1.8-3.4 3.3c-0.7 1-1.5 1.4-2.6 0.9" fill="none" stroke="#5a5a5a" stroke-width="1.3"/></svg>
<div style="position:absolute;left:251px;top:163px;width:606px;height:26px;background:#fff;border:1px solid #c6c6c6;box-sizing:border-box"></div>
<div class="t" style="left:263.3px;top:170.94px;font-size:12px;line-height:12px;color:#262626;font-weight:400;">1</div>
<svg style="position:absolute;left:843px;top:171px;" width="11" height="8" viewBox="0 0 11 8"><path d="M1.5 1.5l4 4 4-4" fill="none" stroke="#6b6b6b" stroke-width="1.6"/></svg>
<div style="position:absolute;left:1px;top:199px;width:842px;height:20px;background:#e6e6e6"></div>
<div style="position:absolute;left:474px;top:199px;width:64px;height:19px;background:#d2d2d2"></div>
<div style="position:absolute;left:474px;top:216px;width:65px;height:2px;background:#217346"></div>
<div style="position:absolute;left:1px;top:218px;width:840px;height:1px;background:#9e9e9e"></div>
<div style="position:absolute;left:26px;top:199px;width:1px;height:476px;background:#9e9e9e"></div>
<svg style="position:absolute;left:11px;top:203px;" width="13" height="12" viewBox="0 0 13 12"><path d="M12 0.5v11.5h-11.5z" fill="#b5b5b5"/></svg>
<div style="position:absolute;left:90px;top:199px;width:1px;height:19px;background:linear-gradient(#d2d2d2,#a4a4a4)"></div>
<div class="t" style="left:-441px;width:1000px;text-align:center;top:202.74px;font-size:12px;line-height:12px;color:#222;font-weight:400;">A</div>
<div style="position:absolute;left:154px;top:199px;width:1px;height:19px;background:linear-gradient(#d2d2d2,#a4a4a4)"></div>
<div class="t" style="left:-377px;width:1000px;text-align:center;top:202.74px;font-size:12px;line-height:12px;color:#222;font-weight:400;">B</div>
<div style="position:absolute;left:218px;top:199px;width:1px;height:19px;background:linear-gradient(#d2d2d2,#a4a4a4)"></div>
<div class="t" style="left:-313px;width:1000px;text-align:center;top:202.74px;font-size:12px;line-height:12px;color:#222;font-weight:400;">C</div>
<div style="position:absolute;left:282px;top:199px;width:1px;height:19px;background:linear-gradient(#d2d2d2,#a4a4a4)"></div>
<div class="t" style="left:-249px;width:1000px;text-align:center;top:202.74px;font-size:12px;line-height:12px;color:#222;font-weight:400;">D</div>
<div style="position:absolute;left:346px;top:199px;width:1px;height:19px;background:linear-gradient(#d2d2d2,#a4a4a4)"></div>
<div class="t" style="left:-185px;width:1000px;text-align:center;top:202.74px;font-size:12px;line-height:12px;color:#222;font-weight:400;">E</div>
<div style="position:absolute;left:410px;top:199px;width:1px;height:19px;background:linear-gradient(#d2d2d2,#a4a4a4)"></div>
<div class="t" style="left:-121px;width:1000px;text-align:center;top:202.74px;font-size:12px;line-height:12px;color:#222;font-weight:400;">F</div>
<div style="position:absolute;left:474px;top:199px;width:1px;height:19px;background:linear-gradient(#d2d2d2,#a4a4a4)"></div>
<div class="t" style="left:-57px;width:1000px;text-align:center;top:202.74px;font-size:12px;line-height:12px;color:#222;font-weight:400;">G</div>
<div style="position:absolute;left:538px;top:199px;width:1px;height:19px;background:linear-gradient(#d2d2d2,#a4a4a4)"></div>
<div class="t" style="left:7px;width:1000px;text-align:center;top:202.74px;font-size:12px;line-height:12px;color:#217346;font-weight:400;">H</div>
<div style="position:absolute;left:602px;top:199px;width:1px;height:19px;background:linear-gradient(#d2d2d2,#a4a4a4)"></div>
<div class="t" style="left:71px;width:1000px;text-align:center;top:202.74px;font-size:12px;line-height:12px;color:#222;font-weight:400;">I</div>
<div style="position:absolute;left:666px;top:199px;width:1px;height:19px;background:linear-gradient(#d2d2d2,#a4a4a4)"></div>
<div class="t" style="left:135px;width:1000px;text-align:center;top:202.74px;font-size:12px;line-height:12px;color:#222;font-weight:400;">J</div>
<div style="position:absolute;left:730px;top:199px;width:1px;height:19px;background:linear-gradient(#d2d2d2,#a4a4a4)"></div>
<div class="t" style="left:199px;width:1000px;text-align:center;top:202.74px;font-size:12px;line-height:12px;color:#222;font-weight:400;">K</div>
<div style="position:absolute;left:794px;top:199px;width:1px;height:19px;background:linear-gradient(#d2d2d2,#a4a4a4)"></div>
<div class="t" style="left:263px;width:1000px;text-align:center;top:202.74px;font-size:12px;line-height:12px;color:#222;font-weight:400;">L</div>
<div class="t" style="left:327px;width:1000px;text-align:center;top:202.74px;font-size:12px;line-height:12px;color:#222;font-weight:400;">M</div>
<div style="position:absolute;left:1px;top:219px;width:25px;height:455px;background:#e6e6e6"></div>
<div style="position:absolute;left:1px;top:279px;width:25px;height:200px;background:#d2d2d2"></div>
<div style="position:absolute;left:24px;top:278px;width:2px;height:201px;background:#217346"></div>
<div style="position:absolute;left:1px;top:238px;width:25px;height:1px;background:#b9b9b9"></div>
<div class="t" style="left:-486.7px;width:1000px;text-align:center;top:223.84px;font-size:12px;line-height:12px;color:#222;font-weight:400;">1</div>
<div style="position:absolute;left:1px;top:258px;width:25px;height:1px;background:#b9b9b9"></div>
<div class="t" style="left:-486.7px;width:1000px;text-align:center;top:243.84px;font-size:12px;line-height:12px;color:#222;font-weight:400;">2</div>
<div style="position:absolute;left:1px;top:278px;width:25px;height:1px;background:#b9b9b9"></div>
<div class="t" style="left:-486.7px;width:1000px;text-align:center;top:263.84px;font-size:12px;line-height:12px;color:#222;font-weight:400;">3</div>
<div style="position:absolute;left:1px;top:298px;width:25px;height:1px;background:#b9b9b9"></div>
<div class="t" style="left:-486.7px;width:1000px;text-align:center;top:283.84px;font-size:12px;line-height:12px;color:#217346;font-weight:400;">4</div>
<div style="position:absolute;left:1px;top:318px;width:25px;height:1px;background:#b9b9b9"></div>
<div class="t" style="left:-486.7px;width:1000px;text-align:center;top:303.84px;font-size:12px;line-height:12px;color:#217346;font-weight:400;">5</div>
<div style="position:absolute;left:1px;top:338px;width:25px;height:1px;background:#b9b9b9"></div>
<div class="t" style="left:-486.7px;width:1000px;text-align:center;top:323.84px;font-size:12px;line-height:12px;color:#217346;font-weight:400;">6</div>
<div style="position:absolute;left:1px;top:358px;width:25px;height:1px;background:#b9b9b9"></div>
<div class="t" style="left:-486.7px;width:1000px;text-align:center;top:343.84px;font-size:12px;line-height:12px;color:#217346;font-weight:400;">7</div>
<div style="position:absolute;left:1px;top:378px;width:25px;height:1px;background:#b9b9b9"></div>
<div class="t" style="left:-486.7px;width:1000px;text-align:center;top:363.84px;font-size:12px;line-height:12px;color:#217346;font-weight:400;">8</div>
<div style="position:absolute;left:1px;top:398px;width:25px;height:1px;background:#b9b9b9"></div>
<div class="t" style="left:-486.7px;width:1000px;text-align:center;top:383.84px;font-size:12px;line-height:12px;color:#217346;font-weight:400;">9</div>
<div style="position:absolute;left:1px;top:418px;width:25px;height:1px;background:#b9b9b9"></div>
<div class="t" style="left:-486.7px;width:1000px;text-align:center;top:403.84px;font-size:12px;line-height:12px;color:#217346;font-weight:400;">10</div>
<div style="position:absolute;left:1px;top:438px;width:25px;height:1px;background:#b9b9b9"></div>
<div class="t" style="left:-486.7px;width:1000px;text-align:center;top:423.84px;font-size:12px;line-height:12px;color:#217346;font-weight:400;">11</div>
<div style="position:absolute;left:1px;top:458px;width:25px;height:1px;background:#b9b9b9"></div>
<div class="t" style="left:-486.7px;width:1000px;text-align:center;top:443.84px;font-size:12px;line-height:12px;color:#217346;font-weight:400;">12</div>
<div style="position:absolute;left:1px;top:478px;width:25px;height:1px;background:#b9b9b9"></div>
<div class="t" style="left:-486.7px;width:1000px;text-align:center;top:463.84px;font-size:12px;line-height:12px;color:#217346;font-weight:400;">13</div>
<div style="position:absolute;left:1px;top:498px;width:25px;height:1px;background:#b9b9b9"></div>
<div class="t" style="left:-486.7px;width:1000px;text-align:center;top:483.84px;font-size:12px;line-height:12px;color:#222;font-weight:400;">14</div>
<div style="position:absolute;left:1px;top:518px;width:25px;height:1px;background:#b9b9b9"></div>
<div class="t" style="left:-486.7px;width:1000px;text-align:center;top:503.84px;font-size:12px;line-height:12px;color:#222;font-weight:400;">15</div>
<div style="position:absolute;left:1px;top:538px;width:25px;height:1px;background:#b9b9b9"></div>
<div class="t" style="left:-486.7px;width:1000px;text-align:center;top:523.84px;font-size:12px;line-height:12px;color:#222;font-weight:400;">16</div>
<div style="position:absolute;left:1px;top:558px;width:25px;height:1px;background:#b9b9b9"></div>
<div class="t" style="left:-486.7px;width:1000px;text-align:center;top:543.84px;font-size:12px;line-height:12px;color:#222;font-weight:400;">17</div>
<div style="position:absolute;left:1px;top:578px;width:25px;height:1px;background:#b9b9b9"></div>
<div class="t" style="left:-486.7px;width:1000px;text-align:center;top:563.84px;font-size:12px;line-height:12px;color:#222;font-weight:400;">18</div>
<div style="position:absolute;left:1px;top:598px;width:25px;height:1px;background:#b9b9b9"></div>
<div class="t" style="left:-486.7px;width:1000px;text-align:center;top:583.84px;font-size:12px;line-height:12px;color:#222;font-weight:400;">19</div>
<div style="position:absolute;left:1px;top:618px;width:25px;height:1px;background:#b9b9b9"></div>
<div class="t" style="left:-486.7px;width:1000px;text-align:center;top:603.84px;font-size:12px;line-height:12px;color:#222;font-weight:400;">20</div>
<div style="position:absolute;left:1px;top:638px;width:25px;height:1px;background:#b9b9b9"></div>
<div class="t" style="left:-486.7px;width:1000px;text-align:center;top:623.84px;font-size:12px;line-height:12px;color:#222;font-weight:400;">21</div>
<div style="position:absolute;left:1px;top:658px;width:25px;height:1px;background:#b9b9b9"></div>
<div class="t" style="left:-486.7px;width:1000px;text-align:center;top:643.84px;font-size:12px;line-height:12px;color:#222;font-weight:400;">22</div>
<div class="t" style="left:-486.7px;width:1000px;text-align:center;top:663.84px;font-size:12px;line-height:12px;color:#222;font-weight:400;">23</div>
<div style="position:absolute;left:27px;top:219px;width:814px;height:455px;background:#fff"></div>
<div style="position:absolute;left:90px;top:219px;width:1px;height:455px;background:#d4d4d4"></div>
<div style="position:absolute;left:154px;top:219px;width:1px;height:455px;background:#d4d4d4"></div>
<div style="position:absolute;left:218px;top:219px;width:1px;height:455px;background:#d4d4d4"></div>
<div style="position:absolute;left:282px;top:219px;width:1px;height:455px;background:#d4d4d4"></div>
<div style="position:absolute;left:346px;top:219px;width:1px;height:455px;background:#d4d4d4"></div>
<div style="position:absolute;left:410px;top:219px;width:1px;height:455px;background:#d4d4d4"></div>
<div style="position:absolute;left:474px;top:219px;width:1px;height:455px;background:#d4d4d4"></div>
<div style="position:absolute;left:538px;top:219px;width:1px;height:455px;background:#d4d4d4"></div>
<div style="position:absolute;left:602px;top:219px;width:1px;height:455px;background:#d4d4d4"></div>
<div style="position:absolute;left:666px;top:219px;width:1px;height:455px;background:#d4d4d4"></div>
<div style="position:absolute;left:730px;top:219px;width:1px;height:455px;background:#d4d4d4"></div>
<div style="position:absolute;left:794px;top:219px;width:1px;height:455px;background:#d4d4d4"></div>
<div style="position:absolute;left:27px;top:238px;width:814px;height:1px;background:#d4d4d4"></div>
<div style="position:absolute;left:27px;top:258px;width:814px;height:1px;background:#d4d4d4"></div>
<div style="position:absolute;left:27px;top:278px;width:814px;height:1px;background:#d4d4d4"></div>
<div style="position:absolute;left:27px;top:298px;width:814px;height:1px;background:#d4d4d4"></div>
<div style="position:absolute;left:27px;top:318px;width:814px;height:1px;background:#d4d4d4"></div>
<div style="position:absolute;left:27px;top:338px;width:814px;height:1px;background:#d4d4d4"></div>
<div style="position:absolute;left:27px;top:358px;width:814px;height:1px;background:#d4d4d4"></div>
<div style="position:absolute;left:27px;top:378px;width:814px;height:1px;background:#d4d4d4"></div>
<div style="position:absolute;left:27px;top:398px;width:814px;height:1px;background:#d4d4d4"></div>
<div style="position:absolute;left:27px;top:418px;width:814px;height:1px;background:#d4d4d4"></div>
<div style="position:absolute;left:27px;top:438px;width:814px;height:1px;background:#d4d4d4"></div>
<div style="position:absolute;left:27px;top:458px;width:814px;height:1px;background:#d4d4d4"></div>
<div style="position:absolute;left:27px;top:478px;width:814px;height:1px;background:#d4d4d4"></div>
<div style="position:absolute;left:27px;top:498px;width:814px;height:1px;background:#d4d4d4"></div>
<div style="position:absolute;left:27px;top:518px;width:814px;height:1px;background:#d4d4d4"></div>
<div style="position:absolute;left:27px;top:538px;width:814px;height:1px;background:#d4d4d4"></div>
<div style="position:absolute;left:27px;top:558px;width:814px;height:1px;background:#d4d4d4"></div>
<div style="position:absolute;left:27px;top:578px;width:814px;height:1px;background:#d4d4d4"></div>
<div style="position:absolute;left:27px;top:598px;width:814px;height:1px;background:#d4d4d4"></div>
<div style="position:absolute;left:27px;top:618px;width:814px;height:1px;background:#d4d4d4"></div>
<div style="position:absolute;left:27px;top:638px;width:814px;height:1px;background:#d4d4d4"></div>
<div style="position:absolute;left:27px;top:658px;width:814px;height:1px;background:#d4d4d4"></div>
<div style="position:absolute;left:840px;top:218px;width:1px;height:457px;background:#9e9e9e"></div>
<div style="position:absolute;left:1px;top:674px;width:840px;height:1px;background:#8c8c8c"></div>
<div class="t" style="left:-490.5px;width:1000px;text-align:right;top:283.84px;font-size:12px;line-height:12px;color:#222;font-weight:400;">1</div>
<div style="position:absolute;left:473px;top:277px;width:67px;height:202px;border:2px solid #217346;box-sizing:border-box"></div>
<div style="position:absolute;left:537px;top:475px;width:5px;height:5px;background:#217346;border:1px solid #fff"></div>
<div style="position:absolute;left:521px;top:280px;width:17px;height:17px;background:linear-gradient(#eaeaea,#d6d6d6);border:1px solid #a6a6a6;box-sizing:border-box"></div>
<svg style="position:absolute;left:526px;top:287px;" width="7" height="4" viewBox="0 0 7 4"><path d="M0 0h7l-3.5 3.5z" fill="#666"/></svg>
<div style="position:absolute;left:841px;top:199px;width:21px;height:476px;background:#e6e6e6"></div>
<div style="position:absolute;left:844px;top:200px;width:15px;height:475px;background:#dcdcdc"></div>
<div style="position:absolute;left:844px;top:201px;width:15px;height:15px;background:#fff;border:1px solid #adadad;box-sizing:border-box"></div>
<svg style="position:absolute;left:847px;top:206px;" width="9" height="5" viewBox="0 0 9 5"><path d="M0 4.5h9l-4.5-4.5z" fill="#6b6b6b"/></svg>
<div style="position:absolute;left:844px;top:216px;width:15px;height:423px;background:#fff;border:1px solid #a6a6a6;box-sizing:border-box"></div>
<div style="position:absolute;left:844px;top:660px;width:15px;height:15px;background:#fff;border:1px solid #c0c0c0;box-sizing:border-box"></div>
<svg style="position:absolute;left:847px;top:665px;" width="9" height="5" viewBox="0 0 9 5"><path d="M0 0h9l-4.5 4.5z" fill="#6b6b6b"/></svg>
<div style="position:absolute;left:1px;top:675px;width:861px;height:28px;background:#e6e6e6"></div>
<div style="position:absolute;left:101px;top:674px;width:60px;height:25px;background:#fff;border-left:1px solid #8c8c8c;border-right:1px solid #8c8c8c;box-sizing:border-box"></div>
<div style="position:absolute;left:101px;top:697px;width:60px;height:2px;background:#217346"></div>
<div class="t" style="left:112.4px;top:681.84px;font-size:12px;line-height:12px;color:#217346;font-weight:700;">Лист1</div>
<svg style="position:absolute;left:194px;top:680px;" width="16" height="16" viewBox="0 0 16 16"><circle cx="8" cy="8" r="7" fill="none" stroke="#777" stroke-width="1.1"/><path d="M8 4v8M4 8h8" stroke="#555" stroke-width="1.5"/></svg>
<div style="position:absolute;left:538px;top:681px;width:303px;height:15px;background:#dcdcdc"></div>
<div style="position:absolute;left:538px;top:681px;width:11px;height:15px;background:#fff;border:1px solid #b5b5b5;box-sizing:border-box"></div>
<svg style="position:absolute;left:539px;top:685px;" width="6" height="8" viewBox="0 0 6 8"><path d="M4.5 0v7.5l-4-3.75z" fill="#6b6b6b"/></svg>
<div style="position:absolute;left:549px;top:681px;width:253px;height:15px;background:#fff;border:1px solid #a6a6a6;box-sizing:border-box"></div>
<div style="position:absolute;left:826px;top:681px;width:15px;height:15px;background:#fff;border:1px solid #b5b5b5;box-sizing:border-box"></div>
<svg style="position:absolute;left:832px;top:684px;" width="6" height="9" viewBox="0 0 6 9"><path d="M0.5 0v9l4.5-4.5z" fill="#6b6b6b"/></svg>
<div style="position:absolute;left:1px;top:702px;width:861px;height:1px;background:#d5d5d5"></div>
<div style="position:absolute;left:1px;top:703px;width:861px;height:21px;background:#f1f1f1"></div>
<div class="t" style="left:8.3px;top:708.27px;font-size:11.5px;line-height:11.5px;color:#444;font-weight:400;">Готово</div>
<div class="t" style="left:263.7px;top:706.89px;font-size:11px;line-height:11px;color:#444;font-weight:400;">Среднее: 4,6</div>
<div class="t" style="left:393.4px;top:706.89px;font-size:11px;line-height:11px;color:#444;font-weight:400;transform:scaleX(1.02);transform-origin:left;">Количество: 10</div>
<div class="t" style="left:489.4px;top:706.89px;font-size:11px;line-height:11px;color:#444;font-weight:400;">Сумма: 46</div>
<div style="position:absolute;left:560px;top:703px;width:37px;height:21px;background:#c8c8c8"></div>
<svg style="position:absolute;left:570px;top:705px;" width="15" height="15" viewBox="0 0 15 15"><path d="M1.5 1.5h12v12h-12zM1.5 5.5h12M1.5 9.5h12M5.5 1.5v12M9.5 1.5v12" fill="none" stroke="#6b6b6b" stroke-width="1.2"/></svg>
<svg style="position:absolute;left:608px;top:705px;" width="16" height="15" viewBox="0 0 16 15"><rect x="1.5" y="1.5" width="13" height="12.5" fill="none" stroke="#6b6b6b" stroke-width="1.2"/><rect x="4.5" y="3.5" width="7" height="8.5" fill="none" stroke="#6b6b6b" stroke-width="1"/><path d="M6 5.5h4M6 7.7h4M6 9.9h4" stroke="#6b6b6b" stroke-width="1"/></svg>
<svg style="position:absolute;left:646px;top:705px;" width="16" height="15" viewBox="0 0 16 15"><rect x="1.5" y="1.5" width="13" height="12.5" fill="none" stroke="#6b6b6b" stroke-width="1.2"/><path d="M1.5 8.5h8.5V1.5M6 8.5V1.5" fill="none" stroke="#6b6b6b" stroke-width="1.1"/></svg>
<div style="position:absolute;left:677.5px;top:712px;width:6.5px;height:2px;background:#555"></div>
<div style="position:absolute;left:686px;top:712.5px;width:102px;height:1px;background:#a9a9a9"></div>
<div style="position:absolute;left:736px;top:707px;width:4px;height:11px;background:#6b6b6b"></div>
<svg style="position:absolute;left:791px;top:707px;" width="10" height="11" viewBox="0 0 10 11"><path d="M5 1v9M0.8 5.5h8.4" stroke="#555" stroke-width="2"/></svg>
<div class="t" style="left:-157.20000000000005px;width:1000px;text-align:right;top:707.27px;font-size:11.5px;line-height:11.5px;color:#444;font-weight:400;transform:scaleX(0.9);transform-origin:right;">100%</div>
<div style="position:absolute;left:270px;top:297px;width:268px;height:398px;background:#fff;border:1px solid #c6c6c6;box-sizing:border-box;box-shadow:2px 2px 3px rgba(0,0,0,0.18)"></div>
<div style="position:absolute;left:271px;top:297px;width:266px;height:24.5px;background:#c6c6c6"></div>
<div class="t" style="left:302.5px;top:304.34px;font-size:12px;line-height:12px;color:#262626;font-weight:400;">Сортировка по <u style="text-decoration-thickness:1px;text-underline-offset:1.5px">в</u>озрастанию</div>
<div class="t" style="left:302.5px;top:328.34px;font-size:12px;line-height:12px;color:#262626;font-weight:400;">Сортировка по убыв<u style="text-decoration-thickness:1px;text-underline-offset:1.5px">а</u>нию</div>
<div class="t" style="left:302.5px;top:352.34px;font-size:12px;line-height:12px;color:#262626;font-weight:400;"><u style="text-decoration-thickness:1px;text-underline-offset:1.5px">С</u>ортировка по цвету</div>
<div style="position:absolute;left:302px;top:370px;width:235px;height:1px;background:#e1e1e1"></div>
<div class="t" style="left:302.5px;top:378.90px;font-size:11.7px;line-height:11.7px;color:#a6a6a6;font-weight:400;"><u style="text-decoration-thickness:1px;text-underline-offset:1.5px">У</u>далить фильтр из столбца "1"</div>
<div class="t" style="left:302.5px;top:402.84px;font-size:12px;line-height:12px;color:#a6a6a6;font-weight:400;"><u style="text-decoration-thickness:1px;text-underline-offset:1.5px">Ф</u>ильтр по цвету</div>
<div class="t" style="left:302.5px;top:427.14px;font-size:12px;line-height:12px;color:#262626;font-weight:400;">Числовые <u style="text-decoration-thickness:1px;text-underline-offset:1.5px">ф</u>ильтры</div>
<div style="position:absolute;left:302px;top:444px;width:235px;height:1px;background:#e1e1e1"></div>
<svg style="position:absolute;left:524px;top:354.0px;" width="5" height="7" viewBox="0 0 5 7"><path d="M0 0v7l4.5-3.5z" fill="#6b6b6b"/></svg>
<svg style="position:absolute;left:524px;top:404.0px;" width="5" height="7" viewBox="0 0 5 7"><path d="M0 0v7l4.5-3.5z" fill="#c6c6c6"/></svg>
<svg style="position:absolute;left:524px;top:427.9px;" width="5" height="7" viewBox="0 0 5 7"><path d="M0 0v7l4.5-3.5z" fill="#6b6b6b"/></svg>
<svg style="position:absolute;left:276.8px;top:302px;" width="16" height="17" viewBox="0 0 16 17"><text x="-0.3" y="6.4" font-family="Liberation Sans" font-size="9" font-weight="700" fill="#3f7dc4">A</text><text x="-0.1" y="14.8" font-family="Liberation Sans" font-size="9" font-weight="700" fill="#8e58b0">Я</text><path d="M10.6 0.3v14.6M8.3 11.7l2.3 3.3 2.3-3.3" fill="none" stroke="#6b6b6b" stroke-width="1.1"/></svg>
<svg style="position:absolute;left:276.8px;top:326px;" width="16" height="17" viewBox="0 0 16 17"><text x="-0.3" y="6.4" font-family="Liberation Sans" font-size="9" font-weight="700" fill="#8e58b0">Я</text><text x="-0.1" y="14.8" font-family="Liberation Sans" font-size="9" font-weight="700" fill="#3f7dc4">A</text><path d="M10.6 0.3v14.6M8.3 11.7l2.3 3.3 2.3-3.3" fill="none" stroke="#6b6b6b" stroke-width="1.1"/></svg>
<svg style="position:absolute;left:275px;top:376px;" width="17" height="17" viewBox="0 0 17 17"><path d="M1 1h11l-4.4 4.8v5.6h-2.2v-5.6z" fill="#a8a8a8"/><path d="M7.5 8.5l8 7.5M7.5 16l8-7.5" stroke="#a8a8a8" stroke-width="1.3"/></svg>
<div style="position:absolute;left:301px;top:450px;width:230px;height:21px;background:#fff;border:1px solid #a6a6a6;box-sizing:border-box"></div>
<div class="t" style="left:303.7px;top:453.64px;font-size:12px;line-height:12px;color:#555;font-weight:400;">Поиск</div>
<svg style="position:absolute;left:514px;top:453px;" width="15" height="14" viewBox="0 0 15 14"><circle cx="9" cy="5.5" r="3.9" fill="none" stroke="#3f7dc4" stroke-width="1.6"/><path d="M6.2 8.3l-4.7 4.7" stroke="#3f7dc4" stroke-width="2.4" stroke-linecap="round"/></svg>
<div style="position:absolute;left:301px;top:474px;width:230px;height:169px;background:#fff;border:1px solid #d9dce1;box-sizing:border-box"></div>
<div style="position:absolute;left:324px;top:477.2px;width:11px;height:11px;background:#fff;border:1px solid #7a7a7a;box-sizing:border-box"></div>
<svg style="position:absolute;left:325px;top:478.2px;" width="9" height="9" viewBox="0 0 9 9"><path d="M1.4 4.3l2.2 2.6 4.2-5.6" fill="none" stroke="#000" stroke-width="2.1"/></svg>
<div class="t" style="left:337.8px;top:478.19px;font-size:11px;line-height:11px;color:#000;font-weight:400;">(Выделить все)</div>
<div style="position:absolute;left:324px;top:493.2px;width:11px;height:11px;background:#fff;border:1px solid #7a7a7a;box-sizing:border-box"></div>
<svg style="position:absolute;left:325px;top:494.2px;" width="9" height="9" viewBox="0 0 9 9"><path d="M1.4 4.3l2.2 2.6 4.2-5.6" fill="none" stroke="#000" stroke-width="2.1"/></svg>
<div class="t" style="left:337.8px;top:494.19px;font-size:11px;line-height:11px;color:#000;font-weight:400;">2</div>
<div style="position:absolute;left:324px;top:509.20000000000005px;width:11px;height:11px;background:#fff;border:1px solid #7a7a7a;box-sizing:border-box"></div>
<svg style="position:absolute;left:325px;top:510.20000000000005px;" width="9" height="9" viewBox="0 0 9 9"><path d="M1.4 4.3l2.2 2.6 4.2-5.6" fill="none" stroke="#000" stroke-width="2.1"/></svg>
<div class="t" style="left:337.8px;top:510.19px;font-size:11px;line-height:11px;color:#000;font-weight:400;">3</div>
<div style="position:absolute;left:324px;top:525.2px;width:11px;height:11px;background:#fff;border:1px solid #7a7a7a;box-sizing:border-box"></div>
<svg style="position:absolute;left:325px;top:526.2px;" width="9" height="9" viewBox="0 0 9 9"><path d="M1.4 4.3l2.2 2.6 4.2-5.6" fill="none" stroke="#000" stroke-width="2.1"/></svg>
<div class="t" style="left:337.8px;top:526.19px;font-size:11px;line-height:11px;color:#000;font-weight:400;">4</div>
<div style="position:absolute;left:324px;top:541.2px;width:11px;height:11px;background:#fff;border:1px solid #7a7a7a;box-sizing:border-box"></div>
<svg style="position:absolute;left:325px;top:542.2px;" width="9" height="9" viewBox="0 0 9 9"><path d="M1.4 4.3l2.2 2.6 4.2-5.6" fill="none" stroke="#000" stroke-width="2.1"/></svg>
<div class="t" style="left:337.8px;top:542.19px;font-size:11px;line-height:11px;color:#000;font-weight:400;">6</div>
<div style="position:absolute;left:324px;top:557.2px;width:11px;height:11px;background:#fff;border:1px solid #7a7a7a;box-sizing:border-box"></div>
<svg style="position:absolute;left:325px;top:558.2px;" width="9" height="9" viewBox="0 0 9 9"><path d="M1.4 4.3l2.2 2.6 4.2-5.6" fill="none" stroke="#000" stroke-width="2.1"/></svg>
<div class="t" style="left:337.8px;top:558.19px;font-size:11px;line-height:11px;color:#000;font-weight:400;">8</div>
<svg style="position:absolute;left:314px;top:483px;" width="10" height="82" viewBox="0 0 10 82"><rect x="0" y="0" width="1" height="1" fill="#777"/><rect x="2" y="0" width="1" height="1" fill="#777"/><rect x="4" y="0" width="1" height="1" fill="#777"/><rect x="6" y="0" width="1" height="1" fill="#777"/><rect x="8" y="0" width="1" height="1" fill="#777"/><rect x="0" y="16" width="1" height="1" fill="#777"/><rect x="2" y="16" width="1" height="1" fill="#777"/><rect x="4" y="16" width="1" height="1" fill="#777"/><rect x="6" y="16" width="1" height="1" fill="#777"/><rect x="8" y="16" width="1" height="1" fill="#777"/><rect x="0" y="32" width="1" height="1" fill="#777"/><rect x="2" y="32" width="1" height="1" fill="#777"/><rect x="4" y="32" width="1" height="1" fill="#777"/><rect x="6" y="32" width="1" height="1" fill="#777"/><rect x="8" y="32" width="1" height="1" fill="#777"/><rect x="0" y="48" width="1" height="1" fill="#777"/><rect x="2" y="48" width="1" height="1" fill="#777"/><rect x="4" y="48" width="1" height="1" fill="#777"/><rect x="6" y="48" width="1" height="1" fill="#777"/><rect x="8" y="48" width="1" height="1" fill="#777"/><rect x="0" y="64" width="1" height="1" fill="#777"/><rect x="2" y="64" width="1" height="1" fill="#777"/><rect x="4" y="64" width="1" height="1" fill="#777"/><rect x="6" y="64" width="1" height="1" fill="#777"/><rect x="8" y="64" width="1" height="1" fill="#777"/><rect x="0" y="80" width="1" height="1" fill="#777"/><rect x="2" y="80" width="1" height="1" fill="#777"/><rect x="4" y="80" width="1" height="1" fill="#777"/><rect x="6" y="80" width="1" height="1" fill="#777"/><rect x="8" y="80" width="1" height="1" fill="#777"/><rect x="0" y="0" width="1" height="1" fill="#777"/><rect x="0" y="2" width="1" height="1" fill="#777"/><rect x="0" y="4" width="1" height="1" fill="#777"/><rect x="0" y="6" width="1" height="1" fill="#777"/><rect x="0" y="8" width="1" height="1" fill="#777"/><rect x="0" y="10" width="1" height="1" fill="#777"/><rect x="0" y="12" width="1" height="1" fill="#777"/><rect x="0" y="14" width="1" height="1" fill="#777"/><rect x="0" y="16" width="1" height="1" fill="#777"/><rect x="0" y="18" width="1" height="1" fill="#777"/><rect x="0" y="20" width="1" height="1" fill="#777"/><rect x="0" y="22" width="1" height="1" fill="#777"/><rect x="0" y="24" width="1" height="1" fill="#777"/><rect x="0" y="26" width="1" height="1" fill="#777"/><rect x="0" y="28" width="1" height="1" fill="#777"/><rect x="0" y="30" width="1" height="1" fill="#777"/><rect x="0" y="32" width="1" height="1" fill="#777"/><rect x="0" y="34" width="1" height="1" fill="#777"/><rect x="0" y="36" width="1" height="1" fill="#777"/><rect x="0" y="38" width="1" height="1" fill="#777"/><rect x="0" y="40" width="1" height="1" fill="#777"/><rect x="0" y="42" width="1" height="1" fill="#777"/><rect x="0" y="44" width="1" height="1" fill="#777"/><rect x="0" y="46" width="1" height="1" fill="#777"/><rect x="0" y="48" width="1" height="1" fill="#777"/><rect x="0" y="50" width="1" height="1" fill="#777"/><rect x="0" y="52" width="1" height="1" fill="#777"/><rect x="0" y="54" width="1" height="1" fill="#777"/><rect x="0" y="56" width="1" height="1" fill="#777"/><rect x="0" y="58" width="1" height="1" fill="#777"/><rect x="0" y="60" width="1" height="1" fill="#777"/><rect x="0" y="62" width="1" height="1" fill="#777"/><rect x="0" y="64" width="1" height="1" fill="#777"/><rect x="0" y="66" width="1" height="1" fill="#777"/><rect x="0" y="68" width="1" height="1" fill="#777"/><rect x="0" y="70" width="1" height="1" fill="#777"/><rect x="0" y="72" width="1" height="1" fill="#777"/><rect x="0" y="74" width="1" height="1" fill="#777"/><rect x="0" y="76" width="1" height="1" fill="#777"/><rect x="0" y="78" width="1" height="1" fill="#777"/><rect x="0" y="80" width="1" height="1" fill="#777"/></svg>
<div style="position:absolute;left:373px;top:658px;width:73px;height:21px;background:#e1e1e1;border:1px solid #adadad;box-sizing:border-box"></div>
<div style="position:absolute;left:457px;top:658px;width:73px;height:21px;background:#e1e1e1;border:1px solid #adadad;box-sizing:border-box"></div>
<div class="t" style="left:-90.5px;width:1000px;text-align:center;top:662.84px;font-size:12px;line-height:12px;color:#000;font-weight:400;transform:scaleX(0.84);transform-origin:center;">OK</div>
<div class="t" style="left:-6.399999999999977px;width:1000px;text-align:center;top:662.84px;font-size:12px;line-height:12px;color:#000;font-weight:400;transform:scaleX(0.91);transform-origin:center;">Отмена</div>
<div style="position:absolute;left:271px;top:684px;width:266px;height:1px;background:#dde4ea"></div>
<div style="position:absolute;left:271px;top:688px;width:266px;height:6px;background:linear-gradient(#fff,#ececec)"></div>
<div style="position:absolute;left:532px;top:687px;width:2px;height:2px;background:#9a9a9a"></div>
<div style="position:absolute;left:528px;top:691px;width:2px;height:2px;background:#9a9a9a"></div>
<div style="position:absolute;left:532px;top:691px;width:2px;height:2px;background:#9a9a9a"></div>
<div style="position:absolute;left:257px;top:288px;width:295px;height:59px;border:3px solid #fd3d3d;box-sizing:border-box;filter:drop-shadow(1px 3px 2.5px rgba(0,0,0,0.35))"></div>
<svg style="position:absolute;left:0;top:0;filter:drop-shadow(2px 3px 2.5px rgba(0,0,0,0.35))" width="863" height="725"><g transform="translate(533.2 276.3) rotate(-40)"><path d="M0 0L29.5 -14.5L29.5 -5L105 -5L105 5L29.5 5L29.5 14.5Z" fill="#fd4242"/></g></svg>
<div style="position:absolute;left:584.7px;top:164.39999999999998px;width:75.6px;height:75.6px;border-radius:50%;background:#08ae90;box-shadow:1px 3px 4px rgba(0,0,0,0.4)"></div>
<div class="t" style="left:122.5px;width:1000px;text-align:center;top:176.37px;font-size:54.5px;line-height:54.5px;color:#fff;font-weight:400;-webkit-text-stroke:0.7px #fff;"></div>
<svg style="position:absolute;left:600px;top:175px;" width="45" height="55" viewBox="0 0 45 55"><path d="M24.3 8h3.9v39h-5.4v-29.6l-10.1 4.9v-5.7c4.5-2 8.5-4.8 11.6-8.6z" fill="#fff"/></svg>
<div style="position:absolute;left:194.0px;top:277.7px;width:75.2px;height:75.2px;border-radius:50%;background:#08ae90;box-shadow:1px 3px 4px rgba(0,0,0,0.4)"></div>
<div class="t" style="left:-268.4px;width:1000px;text-align:center;top:289.47px;font-size:54.5px;line-height:54.5px;color:#fff;font-weight:400;-webkit-text-stroke:0.7px #fff;">2</div>
<svg style="position:absolute;left:20px;top:646px;" width="90" height="60" viewBox="0 0 90 60"><rect x="2.7" y="3.4" width="62.8" height="49.5" rx="6" fill="rgba(255,255,255,0.35)" stroke="#d2d2d2" stroke-width="1.2"/><rect x="6.4" y="6.5" width="56.5" height="43.5" rx="5" fill="rgba(250,250,250,0.3)" stroke="#bdbdbd" stroke-width="2.2"/><path d="M33.5 33.5L17 17" stroke="#bcbcbc" stroke-width="3" stroke-linecap="round"/><path d="M11 10.5l15 4.5-10.5 10.5z" fill="#bcbcbc"/><path d="M12 41l3-3v6z" fill="#d8d8d8"/><path d="M40.5 38v6l3-3z" fill="#d8d8d8"/><path d="M22.5 57.5v-3a1.5 1.5 0 0 1 1.5-1.5h16a1.5 1.5 0 0 1 1.5 1.5v3" fill="none" stroke="#c4c4c4" stroke-width="1.2"/></svg>
<svg style="position:absolute;left:0;top:0" width="863" height="725"><path d="M104 665.8H106.5A7.6 7.6 0 0 1 114.1 673.4V675.7A7.6 7.6 0 0 1 106.5 683.3H104A7.6 7.6 0 0 1 96.4 675.7V673.4A7.6 7.6 0 0 1 104 665.8ZM140.7 665.8H127A4.37 4.37 0 0 0 127 674.55H136.3A4.37 4.37 0 0 1 136.3 683.3H122.7" fill="none" stroke="rgba(255,255,255,0.55)" stroke-width="8.6"/><path d="M104 665.8H106.5A7.6 7.6 0 0 1 114.1 673.4V675.7A7.6 7.6 0 0 1 106.5 683.3H104A7.6 7.6 0 0 1 96.4 675.7V673.4A7.6 7.6 0 0 1 104 665.8ZM140.7 665.8H127A4.37 4.37 0 0 0 127 674.55H136.3A4.37 4.37 0 0 1 136.3 683.3H122.7" fill="none" stroke="rgba(250,160,180,0.72)" stroke-width="6.8"/><defs><mask id="hm" maskUnits="userSpaceOnUse" x="0" y="0" width="863" height="725"><path d="M159.8 665V683.4M178.6 665V683.4M159.8 673.6H178.6M185.4 677H196.7V673.8A3 3 0 0 0 193.7 670.8H188.4A3 3 0 0 0 185.4 673.8V680.6A3 3 0 0 0 188.4 683.6H196.7M208.75 664V683.6M217.8 689V673.8A3 3 0 0 1 220.8 670.8H228.3A3 3 0 0 1 231.3 673.8V680.6A3 3 0 0 1 228.3 683.6H217.8M238.8 677H252.4V673.8A3 3 0 0 0 249.4 670.8H241.8A3 3 0 0 0 238.8 673.8V680.6A3 3 0 0 0 241.8 683.6H252.4M261.4 683.6V673.8A3 3 0 0 1 264.4 670.8H272.8" fill="none" stroke="#fff" stroke-width="7.8" stroke-linecap="square"/><path d="M159.8 665V683.4M178.6 665V683.4M159.8 673.6H178.6M185.4 677H196.7V673.8A3 3 0 0 0 193.7 670.8H188.4A3 3 0 0 0 185.4 673.8V680.6A3 3 0 0 0 188.4 683.6H196.7M208.75 664V683.6M217.8 689V673.8A3 3 0 0 1 220.8 670.8H228.3A3 3 0 0 1 231.3 673.8V680.6A3 3 0 0 1 228.3 683.6H217.8M238.8 677H252.4V673.8A3 3 0 0 0 249.4 670.8H241.8A3 3 0 0 0 238.8 673.8V680.6A3 3 0 0 0 241.8 683.6H252.4M261.4 683.6V673.8A3 3 0 0 1 264.4 670.8H272.8" fill="none" stroke="#000" stroke-width="5.4" stroke-linecap="square"/></mask></defs><path d="M159.8 665V683.4M178.6 665V683.4M159.8 673.6H178.6M185.4 677H196.7V673.8A3 3 0 0 0 193.7 670.8H188.4A3 3 0 0 0 185.4 673.8V680.6A3 3 0 0 0 188.4 683.6H196.7M208.75 664V683.6M217.8 689V673.8A3 3 0 0 1 220.8 670.8H228.3A3 3 0 0 1 231.3 673.8V680.6A3 3 0 0 1 228.3 683.6H217.8M238.8 677H252.4V673.8A3 3 0 0 0 249.4 670.8H241.8A3 3 0 0 0 238.8 673.8V680.6A3 3 0 0 0 241.8 683.6H252.4M261.4 683.6V673.8A3 3 0 0 1 264.4 670.8H272.8" fill="none" stroke="rgba(255,255,255,0.85)" stroke-width="5.6" stroke-linecap="square"/><rect x="150" y="655" width="130" height="40" fill="rgba(120,120,120,0.55)" mask="url(#hm)"/></svg>
<div style="position:absolute;left:0px;top:0px;width:1px;height:725px;background:#217346"></div>
<div style="position:absolute;left:862px;top:59px;width:1px;height:666px;background:#217346"></div>
<div style="position:absolute;left:0px;top:724px;width:863px;height:1px;background:#217346"></div>
</body></html>
